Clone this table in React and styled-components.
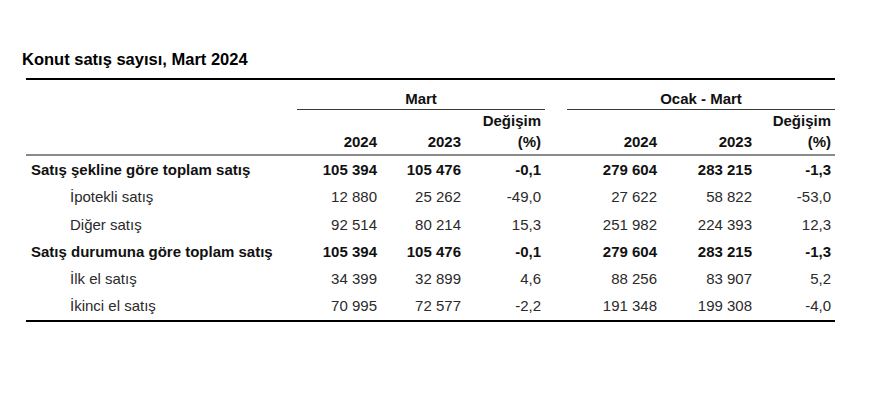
import styled, { createGlobalStyle } from 'styled-components';

const GlobalStyle = createGlobalStyle`
    html, body {
        margin: 0;
        padding: 0;
        background: #ffffff;
    }
    body {
        font-family: "Liberation Sans", Arial, sans-serif;
        color: #222222;
    }
`;

const Page = styled.div`
    // başlık + tablo
    padding: 50px 0 0 22px;
    width: 870px;
    height: 400px;
    box-sizing: border-box;
`;

const Title = styled.h1`
    margin: 0 0 9px 0;
    font-size: 16.5px;
    line-height: 19px;
    font-weight: bold;
    color: #000;
`;

const Table = styled.table`
    margin-left: 4px;
    width: 809px;
    table-layout: fixed;
    border-collapse: separate;
    border-spacing: 0;
    font-size: 15px;
`;

const GroupCell = styled.th`
    border-top: 2px solid #000;
    border-bottom: ${(p) => (p.$underline ? '1px solid #3a3a3a' : '1px solid transparent')};
    height: 27px;
    padding: 0 0 2px 0;
    vertical-align: bottom;
    text-align: center;
    font-weight: bold;
    line-height: 17px;
    color: #111;
`;

const HeadCell = styled.th`
    border-bottom: 2px solid #8a8a8a;
    height: 45px;
    padding: 0 4px 2px 0;
    vertical-align: bottom;
    text-align: right;
    font-weight: bold;
    line-height: 21px;
    color: #111;
    box-sizing: border-box;
`;

const Row = styled.tr`
    height: 27.25px;
`;

const Label = styled.td`
    padding-left: ${(p) => (p.$indent ? '44px' : '5px')};
    font-weight: ${(p) => (p.$bold ? 'bold' : 'normal')};
    color: ${(p) => (p.$bold ? '#111' : '#2a2a2a')};
    vertical-align: middle;
    white-space: nowrap;
    line-height: 17px;
`;

const Num = styled.td`
    padding-right: 4px;
    text-align: right;
    vertical-align: middle;
    white-space: nowrap;
    line-height: 17px;
    font-weight: ${(p) => (p.$bold ? 'bold' : 'normal')};
    color: ${(p) => (p.$bold ? '#111' : '#2a2a2a')};
`;

const Spacer = styled.td``;

const Foot = styled.tr`
    td {
        border-top: 2px solid #000;
        height: 0;
        padding: 0;
    }
`;

const rows = [
    { label: 'Satış şekline göre toplam satış', bold: true, v: ['105 394', '105 476', '-0,1', '279 604', '283 215', '-1,3'] },
    { label: 'İpotekli satış', v: ['12 880', '25 262', '-49,0', '27 622', '58 822', '-53,0'] },
    { label: 'Diğer satış', v: ['92 514', '80 214', '15,3', '251 982', '224 393', '12,3'] },
    { label: 'Satış durumuna göre toplam satış', bold: true, v: ['105 394', '105 476', '-0,1', '279 604', '283 215', '-1,3'] },
    { label: 'İlk el satış', v: ['34 399', '32 899', '4,6', '88 256', '83 907', '5,2'] },
    { label: 'İkinci el satış', v: ['70 995', '72 577', '-2,2', '191 348', '199 308', '-4,0'] },
];

export default function App() {
    return (
        <>
            <GlobalStyle />
            <Page>
                <Title>Konut satış sayısı, Mart 2024</Title>
                <Table>
                    <colgroup>
                        <col style={{ width: 271 }} />
                        <col style={{ width: 84 }} />
                        <col style={{ width: 84 }} />
                        <col style={{ width: 80 }} />
                        <col style={{ width: 22 }} />
                        <col style={{ width: 94 }} />
                        <col style={{ width: 95 }} />
                        <col style={{ width: 79 }} />
                    </colgroup>
                    <thead>
                        <tr>
                            <GroupCell />
                            <GroupCell colSpan={3} $underline>Mart</GroupCell>
                            <GroupCell />
                            <GroupCell colSpan={3} $underline>Ocak - Mart</GroupCell>
                        </tr>
                        <tr>
                            <HeadCell />
                            <HeadCell>2024</HeadCell>
                            <HeadCell>2023</HeadCell>
                            <HeadCell>Değişim<br />(%)</HeadCell>
                            <HeadCell />
                            <HeadCell>2024</HeadCell>
                            <HeadCell>2023</HeadCell>
                            <HeadCell>Değişim<br />(%)</HeadCell>
                        </tr>
                    </thead>
                    <tbody>
                        {rows.map((r) => (
                            <Row key={r.label}>
                                <Label $bold={r.bold} $indent={!r.bold}>{r.label}</Label>
                                <Num $bold={r.bold}>{r.v[0]}</Num>
                                <Num $bold={r.bold}>{r.v[1]}</Num>
                                <Num $bold={r.bold}>{r.v[2]}</Num>
                                <Spacer />
                                <Num $bold={r.bold}>{r.v[3]}</Num>
                                <Num $bold={r.bold}>{r.v[4]}</Num>
                                <Num $bold={r.bold}>{r.v[5]}</Num>
                            </Row>
                        ))}
                        <Foot>
                            <td colSpan={8} />
                        </Foot>
                    </tbody>
                </Table>
            </Page>
        </>
    );
}
